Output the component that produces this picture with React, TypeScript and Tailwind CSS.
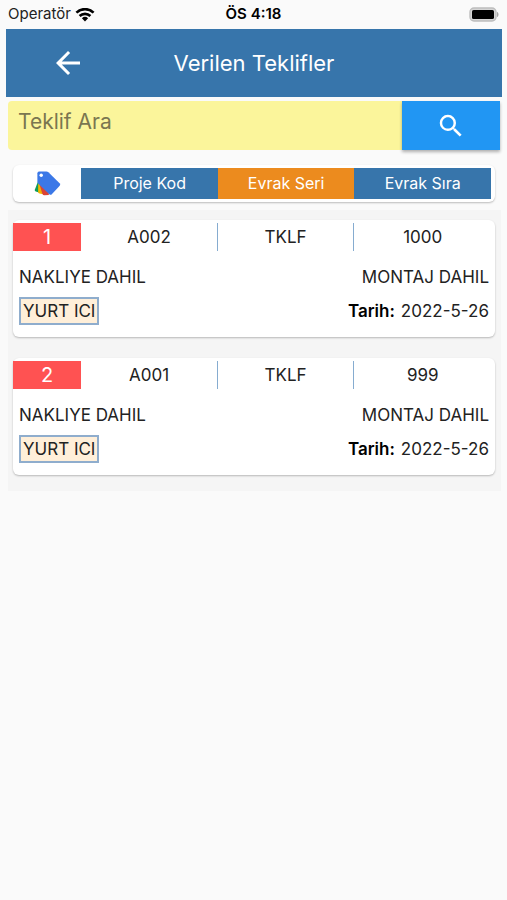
import { useState } from 'react'
import { MdArrowBack, MdSearch } from 'react-icons/md'

type Offer = {
  no: number
  projectCode: string
  series: string
  order: number
  shipping: string
  assembly: string
  region: string
  date: string
}

const offers: Offer[] = [
  {
    no: 1,
    projectCode: 'A002',
    series: 'TKLF',
    order: 1000,
    shipping: 'NAKLIYE DAHIL',
    assembly: 'MONTAJ DAHIL',
    region: 'YURT ICI',
    date: '2022-5-26',
  },
  {
    no: 2,
    projectCode: 'A001',
    series: 'TKLF',
    order: 999,
    shipping: 'NAKLIYE DAHIL',
    assembly: 'MONTAJ DAHIL',
    region: 'YURT ICI',
    date: '2022-5-26',
  },
]

function WifiIcon() {
  return (
    <svg viewBox="0 0 20 14" className="h-[14px] w-5" fill="none" stroke="#000" strokeWidth="2.6">
      <path d="M1.4 4.6a12.4 12.4 0 0 1 17.2 0" />
      <path d="M4.6 8a7.8 7.8 0 0 1 10.8 0" />
      <path d="M10 13.4 6.9 10.2a4.5 4.5 0 0 1 6.2 0Z" fill="#000" stroke="none" />
    </svg>
  )
}

function BatteryIcon() {
  return (
    <svg viewBox="0 0 32 15" className="h-[15px] w-8">
      <rect x="3" y="1" width="26" height="13" rx="4" fill="#d5d5d5" stroke="#bdbdbd" strokeWidth="1.4" />
      <rect x="5" y="3" width="22" height="9" rx="1.6" fill="#000" />
      <path d="M30 5v5c2-.6 2-4.400 0-5Z" fill="#a6a6a6" />
    </svg>
  )
}

function TagsIcon() {
  return (
    <svg viewBox="0 0 27 25" className="h-[25px] w-[27px]">
      <path d="M4 10.500.8 18.800q-.4 1.200.9 1.700l3.300.9L8 13Z" fill="#0f9d58" />
      <path d="M4.200 12.500 4.100 20.800q0 1.400 1.400 1.700l3.700.8L11 15Z" fill="#f4b400" />
      <path d="M5.200 12.500 8.400 22.800q.5 1.500 2 1.500l4.400-.4L15 15Z" fill="#db4437" />
      <path
        d="M5 .5h7.500q1.100 0 1.900.7L25.600 12.300q1.200 1.200.1 2.400l-7.900 8.500q-1.200 1.200-2.500.1L4.100 12.600q-.7-.8-.7-1.800V2.200Q3.400.5 5 .5Z"
        fill="#3b78e7"
      />
      <circle cx="7.200" cy="4.200" r="1.700" fill="#fff" />
    </svg>
  )
}

function StatusBar() {
  return (
    <div className="grid h-[29px] grid-cols-3 items-center px-2 text-black">
      <div className="flex items-center gap-1 text-[15px] text-[#222]">
        <span>Operatör</span>
        <WifiIcon />
      </div>
      <span className="text-center text-[15px] font-semibold">ÖS 4:18</span>
      <div className="flex justify-end">
        <BatteryIcon />
      </div>
    </div>
  )
}

function OfferCard({ offer }: { offer: Offer }) {
  return (
    <li className="rounded-md bg-white pt-[3px] pb-3 shadow-[0_1px_2px_rgba(0,0,0,0.25)]">
      <div className="grid h-7 grid-cols-[1fr_2fr_2fr_2fr] items-stretch pr-1 text-center text-[17px] leading-7">
        <span className="bg-[#ff5252] text-xl leading-7 text-white">{offer.no}</span>
        <span className="border-r border-[#86acd0]">{offer.projectCode}</span>
        <span className="border-r border-[#86acd0]">{offer.series}</span>
        <span>{offer.order}</span>
      </div>
      <div className="mt-3 flex justify-between px-1.5 text-[17px] leading-7">
        <span>{offer.shipping}</span>
        <span>{offer.assembly}</span>
      </div>
      <div className="mt-1.5 flex items-center justify-between px-1.5 text-[17px] leading-6">
        <span className="border-2 border-[#8fadcd] bg-[#ffefd9] px-0.5">{offer.region}</span>
        <span className="flex gap-1.5">
          <b className="font-semibold text-black">Tarih:</b>
          <span>{offer.date}</span>
        </span>
      </div>
    </li>
  )
}

export default function App() {
  const [query, setQuery] = useState('')

  // Arama metnine göre teklifleri filtrele
  const visible = offers.filter(o =>
    `${o.projectCode} ${o.series} ${o.order}`.toLowerCase().includes(query.toLowerCase())
  )

  return (
    <div className="min-h-screen bg-[#fafafa] font-['Inter',sans-serif] text-[#222]">
      <StatusBar />

      {/* Başlık */}
      <header className="mr-[5px] ml-1.5 grid h-[68px] grid-cols-[1fr_2fr_1fr] items-center bg-[#3775ab] text-white">
        <button type="button" aria-label="Geri" className="justify-self-center">
          <MdArrowBack className="size-9" />
        </button>
        <h1 className="text-center text-[22px] leading-8">Verilen Teklifler</h1>
      </header>

      {/* Arama */}
      <form className="mr-[7px] ml-2 mt-1 grid h-[49px] grid-cols-[4fr_1fr]" onSubmit={e => e.preventDefault()}>
        <input
          type="text"
          aria-label="Teklif Ara"
          placeholder="Teklif Ara"
          value={query}
          onChange={e => setQuery(e.target.value)}
          className="min-w-0 rounded-l-sm bg-[#fbf59b] px-2.5 pb-2 text-[21px] outline-none placeholder:text-[#7a7650]"
        />
        <button
          type="submit"
          aria-label="Ara"
          className="flex items-center justify-center bg-[#2196f3] text-white shadow-[0_2px_3px_rgba(0,0,0,0.3)]"
        >
          <MdSearch className="size-[30px]" />
        </button>
      </form>

      {/* Kolon başlıkları */}
      <div className="mr-3 ml-[13px] mt-[15px] rounded-md bg-white pt-[3px] pr-1 pb-[3px] shadow-[0_1px_2px_rgba(0,0,0,0.25)]">
        <div className="grid h-[31px] grid-cols-[1fr_2fr_2fr_2fr] text-center text-base leading-[31px] text-white">
          <span className="flex items-center justify-center">
            <TagsIcon />
          </span>
          <span className="bg-[#3775ab]">Proje Kod</span>
          <span className="bg-[#ec8b1e]">Evrak Seri</span>
          <span className="bg-[#3775ab]">Evrak Sıra</span>
        </div>
      </div>

      <ul className="mr-1.5 ml-2 mt-2 flex flex-col gap-[21px] bg-[#f5f5f5] pt-2.5 pr-1.5 pb-4 pl-[5px]">
        {visible.map(offer => (
          <OfferCard key={offer.no} offer={offer} />
        ))}
      </ul>
    </div>
  )
}
